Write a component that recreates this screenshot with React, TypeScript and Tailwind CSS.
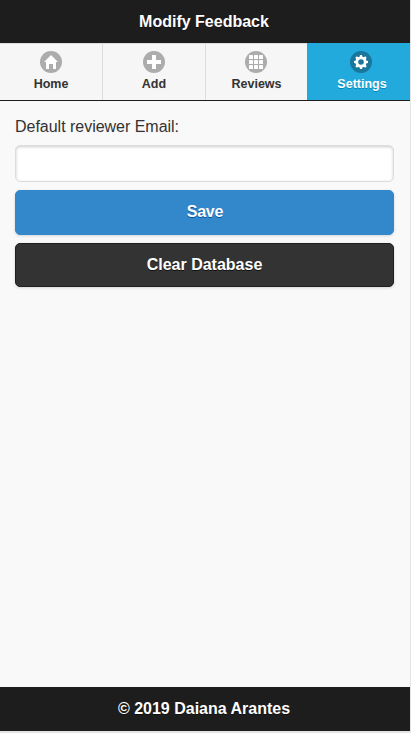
import type { ReactNode } from "react";

function HomeIcon() {
  return <polygon points="7,0 0,7 2,7 2,14 5,14 5,9 9,9 9,14 12,14 12,7 14,7" />;
}

function PlusIcon() {
  return <polygon points="14,5 9,5 9,0 5,0 5,5 0,5 0,9 5,9 5,14 9,14 9,9 14,9" />;
}

function GridIcon() {
  const cells = [0, 5, 10];
  return (
    <>
      {cells.map((y) =>
        cells.map((x) => <rect key={`${x}-${y}`} x={x} y={y} width="4" height="4" rx="0.5" />)
      )}
    </>
  );
}

function GearIcon() {
  return (
    <>
      <path
        fillRule="evenodd"
        d="M7 1.4a5.6 5.6 0 1 0 0 11.2a5.6 5.6 0 1 0 0-11.2zM7 4.2a2.8 2.8 0 1 1 0 5.6a2.8 2.8 0 1 1 0-5.6z"
      />
      {[0, 45, 90, 135, 180, 225, 270, 315].map((angle) => (
        <path key={angle} transform={`rotate(${angle} 7 7)`} d="M6 0h2l0.6 2.5h-3.2z" />
      ))}
    </>
  );
}

type TabProps = {
  label: string;
  icon: ReactNode;
  active?: boolean;
  className: string;
  labelClassName?: string;
};

function Tab({ label, icon, active = false, className, labelClassName = "" }: TabProps) {
  return (
    <a
      className={`flex h-[57px] flex-col items-center border-t pt-[7px] text-[12.5px] font-bold leading-4 ${
        active
          ? "border-[#22aadd] bg-[#22aadd] text-white [text-shadow:0_1px_0_#0088bb]"
          : "border-[#dddddd] bg-[#f6f6f6] text-[#333333] [text-shadow:0_1px_0_#f3f3f3]"
      } ${className}`}
    >
      <span
        className={`flex size-[22px] shrink-0 items-center justify-center rounded-full ${
          active ? "bg-[#18779b]" : "bg-[#acacac]"
        }`}
      >
        <svg className="size-[14px] fill-white" viewBox="0 0 14 14">
          {icon}
        </svg>
      </span>
      <span className={`mt-[3px] ${labelClassName}`}>{label}</span>
    </a>
  );
}

export default function App() {
  return (
    <div className="h-[733px] w-[411px] border-r border-b-2 border-[#e4e4e4] bg-[#f9f9f9] font-['Liberation_Sans',Arial,sans-serif] text-base text-[#333333]">
      <div className="flex h-[731px] flex-col">
        <header className="bg-[#1d1d1d]">
          <h1 className="h-[43px] pr-[2px] pt-[11px] text-center font-bold leading-[21px] text-white [text-shadow:0_1px_0_#111111]">
            Modify Feedback
          </h1>
          <nav className="flex border-b border-[#1d1d1d]">
            <Tab label="Home" icon={<HomeIcon />} className="w-[103px] border-r" />
            <Tab label="Add" icon={<PlusIcon />} className="w-[103px] border-r" />
            <Tab label="Reviews" icon={<GridIcon />} className="w-[101px] pr-px" labelClassName="pl-px" />
            <Tab
              label="Settings"
              icon={<GearIcon />}
              active
              className="w-[103px] pl-[5px]"
              labelClassName="pl-[2px]"
            />
          </nav>
        </header>
        <main className="flex grow flex-col pl-[15px] pr-4 pt-[15px]">
          <label htmlFor="email" className="leading-[21px] tracking-[-0.02px] [text-shadow:0_1px_0_#f3f3f3]">
            Default reviewer Email:
          </label>
          <input
            id="email"
            className="mt-2 h-[37px] rounded-[5px] border border-[#dddddd] bg-white px-2 shadow-[inset_0_1px_3px_rgba(0,0,0,0.2)] outline-none"
          />
          <button className="mt-2 h-[45px] rounded-[5px] border border-[#3388cc] bg-[#3388cc] pb-0.5 pl-px font-bold tracking-[-0.2px] text-white shadow-[0_1px_3px_rgba(0,0,0,0.15)] [text-shadow:0_1px_0_#005599]">
            Save
          </button>
          <button className="mt-2 h-11 rounded-[5px] border border-[#1f1f1f] bg-[#333333] font-bold text-white shadow-[0_1px_3px_rgba(0,0,0,0.15)] [text-shadow:0_1px_0_#111111]">
            Clear Database
          </button>
        </main>
        <footer className="h-11 bg-[#1d1d1d] pr-[2px] pt-[11px] text-center font-bold leading-[21px] text-white [text-shadow:0_1px_0_#111111]">
          © 2019 Daiana Arantes
        </footer>
      </div>
    </div>
  );
}
